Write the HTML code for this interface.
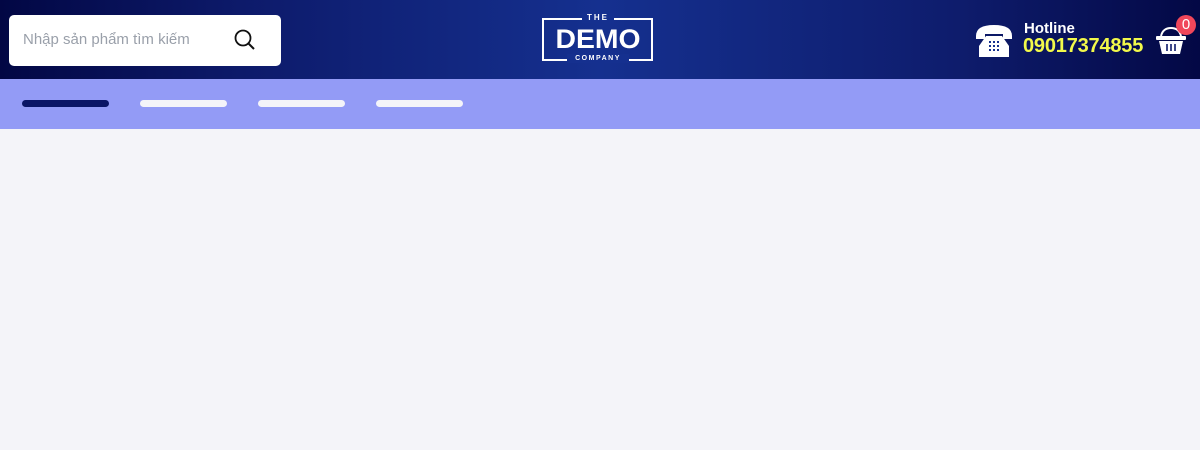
<!DOCTYPE html>
<html><head><meta charset="utf-8"><style>
*{margin:0;padding:0;box-sizing:border-box}
body{width:1200px;height:450px;background:#f4f4f9;font-family:"Liberation Sans",sans-serif;overflow:hidden;position:relative}
.hd{position:absolute;left:0;top:0;width:1200px;height:79px;background:linear-gradient(90deg,#020744 0%,#0d1a6a 20%,#15308f 50%,#0e1c6c 80%,#030845 100%)}
.search{position:absolute;left:9px;top:15px;width:272px;height:51px;background:#fff;border-radius:5px}
.search span{position:absolute;left:14px;top:16px;font-size:15px;color:#9aa0aa;white-space:nowrap;width:176px;overflow:hidden}
.nav{position:absolute;left:0;top:79px;width:1200px;height:50px;background:#939bf6}
.bar{position:absolute;top:21px;width:87px;height:7px;border-radius:4px;background:#f4f4f9}
.logo{position:absolute;left:542px;top:18px;width:111px;height:43px;border:2px solid #fff}
.t{position:absolute;color:#fff;font-weight:bold;text-align:center;background:#15308f}
.hot{position:absolute;left:1024px;top:20px;color:#fff;font-weight:bold;font-size:15px}
.ph{position:absolute;left:1023px;top:35px;color:#f2f94a;font-weight:bold;font-size:20px;letter-spacing:-0.2px}
.badge{position:absolute;left:1176px;top:15px;width:20px;height:20px;border-radius:50%;background:#f0465a;color:#fff;font-size:15px;text-align:center;line-height:20px}
</style></head><body>
<div class="hd">
 <div class="search"><span>Nhập sản phẩm tìm kiếm</span>
  <svg style="position:absolute;left:224px;top:13px" width="24" height="24" viewBox="0 0 24 24"><circle cx="10" cy="10" r="7.5" fill="none" stroke="#111" stroke-width="1.8"/><line x1="15.5" y1="15.5" x2="21" y2="21" stroke="#111" stroke-width="2"/></svg>
 </div>
 <div class="logo"></div>
 <div class="t" style="left:582px;top:13px;width:32px;font-size:8px;letter-spacing:2px;line-height:10px">THE</div>
 <div class="t" style="left:552px;top:25px;width:92px;font-size:27px;line-height:28px;background:none;transform:scaleX(1.05)">DEMO</div>
 <div class="t" style="left:567px;top:54px;width:62px;font-size:7px;letter-spacing:1.5px;line-height:9px">COMPANY</div>
 <svg style="position:absolute;left:975px;top:24px" width="38" height="34" viewBox="0 0 38 34"><path d="M1 12 Q1 1 19 1 Q37 1 37 12 L37 15 L28 15 L28 10 L10 10 L10 15 L1 15Z" fill="#fff"/><path d="M11 12 L27 12 L34 22 L34 33 L4 33 L4 22Z" fill="#fff"/><g fill="#15308f"><rect x="14" y="17" width="2" height="2"/><rect x="18" y="17" width="2" height="2"/><rect x="22" y="17" width="2" height="2"/><rect x="14" y="21" width="2" height="2"/><rect x="18" y="21" width="2" height="2"/><rect x="22" y="21" width="2" height="2"/><rect x="14" y="25" width="2" height="2"/><rect x="18" y="25" width="2" height="2"/><rect x="22" y="25" width="2" height="2"/></g></svg>
 <div class="hot">Hotline</div>
 <div class="ph">09017374855</div>
 <svg style="position:absolute;left:1155px;top:24px" width="32" height="32" viewBox="0 0 32 32"><path d="M6 12 Q8 4 16 4 Q24 4 26 12" fill="none" stroke="#fff" stroke-width="2"/><rect x="1" y="12" width="30" height="4" rx="1" fill="#fff"/><path d="M4 17 L28 17 L25 30 L7 30Z" fill="#fff"/><g stroke="#0d1a6a" stroke-width="1.6"><line x1="12" y1="20" x2="12" y2="27"/><line x1="16" y1="20" x2="16" y2="27"/><line x1="20" y1="20" x2="20" y2="27"/></g></svg>
 <div class="badge">0</div>
</div>
<div class="nav">
 <div class="bar" style="left:22px;background:#0a1566"></div>
 <div class="bar" style="left:140px"></div>
 <div class="bar" style="left:258px"></div>
 <div class="bar" style="left:376px"></div>
</div>
</body></html>
